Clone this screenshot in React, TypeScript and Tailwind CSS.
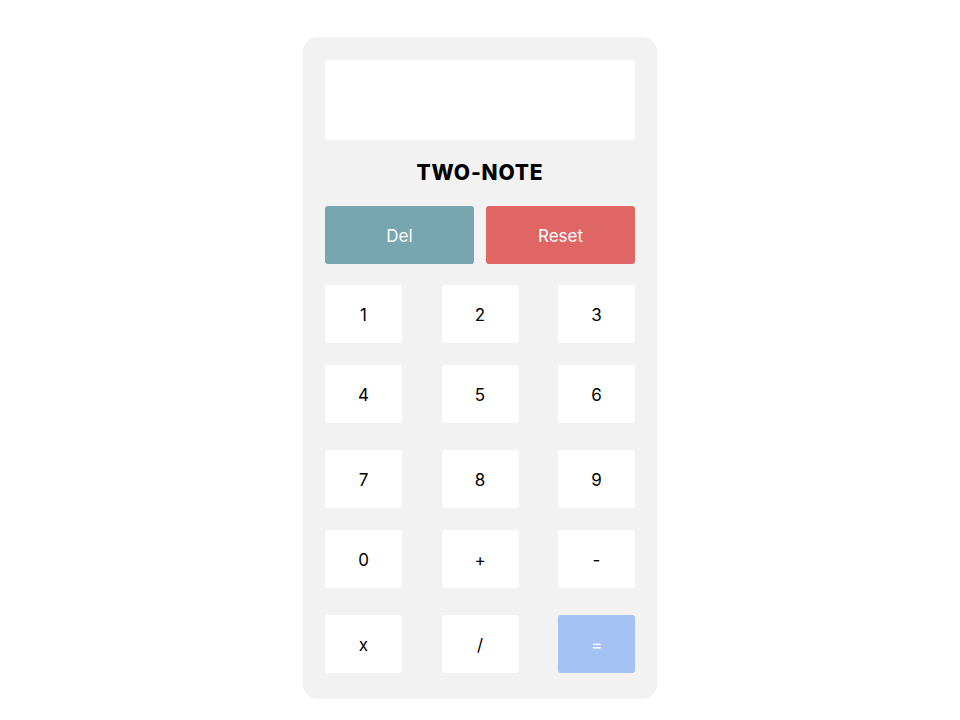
import React from "react";

const Key = ({ label, className = "" }: { label: string; className?: string }) => (
  <button className={`w-[77px] h-[58px] pt-[3px] rounded-[3px] bg-white text-black text-[17px] flex items-center justify-center ${className}`}>
    {label}
  </button>
);

export default function App() {
  return (
    <div className="min-h-[720px] w-full bg-white flex justify-center items-start pt-[37px]" style={{ fontFamily: "Inter, 'Noto Sans', sans-serif" }}>
      <div className="w-[354px] bg-[#f2f2f2] rounded-[14px] pt-[23px] pb-[26px] px-[22px] flex flex-col">
        <div className="h-[80px] w-full bg-white rounded-[4px]" />
        <div className="mt-[18px] h-[28px] flex items-center justify-center text-[21px] font-extrabold text-black tracking-[0.8px] pt-[2px]">
          TWO-NOTE
        </div>
        <div className="mt-[20px] flex justify-between">
          <button className="w-[149px] h-[58px] pt-[3px] rounded-[3px] bg-[#77a5b0] text-white text-[17px] flex items-center justify-center">Del</button>
          <button className="w-[149px] h-[58px] pt-[3px] rounded-[3px] bg-[#e06666] text-white text-[17px] flex items-center justify-center">Reset</button>
        </div>
        <div className="mt-[21px] flex justify-between">
          <Key label="1" />
          <Key label="2" />
          <Key label="3" />
        </div>
        <div className="mt-[22px] flex justify-between">
          <Key label="4" />
          <Key label="5" />
          <Key label="6" />
        </div>
        <div className="mt-[27px] flex justify-between">
          <Key label="7" />
          <Key label="8" />
          <Key label="9" />
        </div>
        <div className="mt-[22px] flex justify-between">
          <Key label="0" />
          <Key label="+" />
          <Key label="-" />
        </div>
        <div className="mt-[27px] flex justify-between">
          <Key label="x" />
          <Key label="/" />
          <Key label="=" className="!bg-[#a4c2f4] !text-white" />
        </div>
      </div>
    </div>
  );
}
